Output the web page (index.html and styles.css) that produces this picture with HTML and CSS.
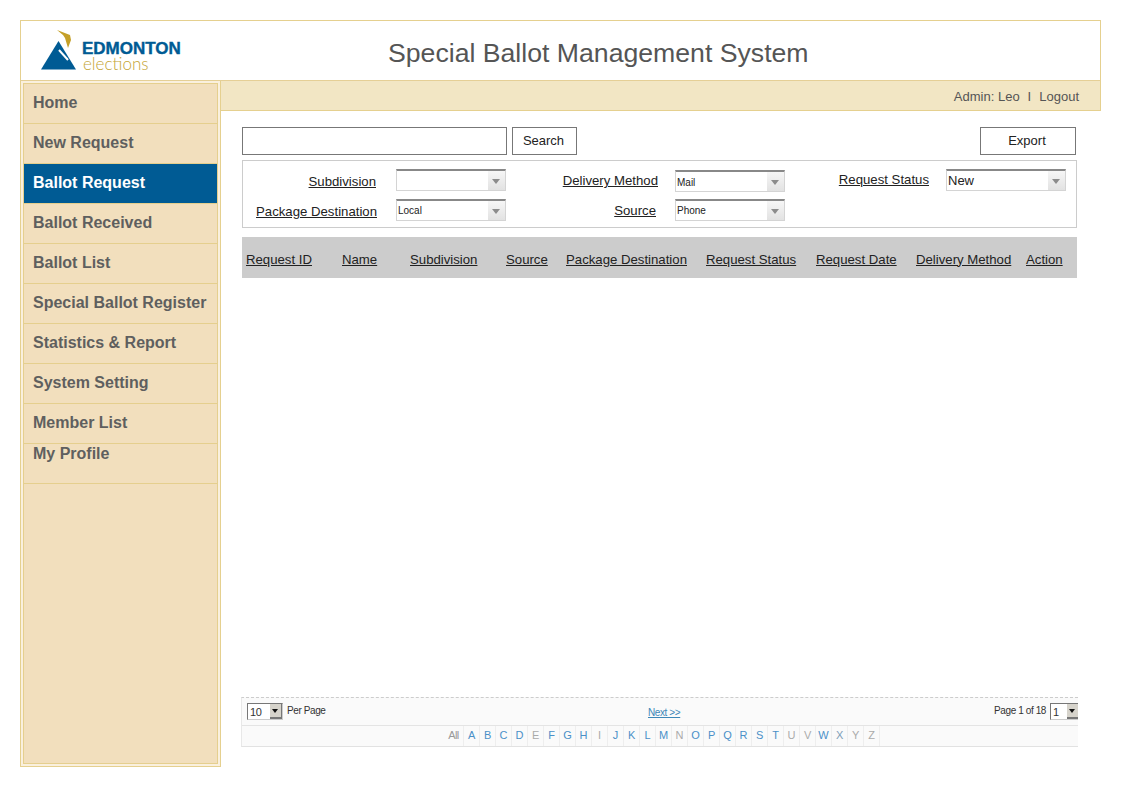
FILE: index.html
```html
<!DOCTYPE html>
<html lang="en">

<head>
    <meta charset="UTF-8" />
    <meta name="viewport" content="width=device-width, initial-scale=1.0" />
    <title>Special Ballot Management System</title>
    <link rel="stylesheet" href="styles.css">
</head>

<body>
    <div class="page">
        <header class="top">
            <div class="logo">
                <svg class="logo-mark" width="36" height="42" viewBox="0 0 36 42">
                    <path d="M0 39.5 L17.5 11 L35 39.5 Z" fill="#005b94" />
                    <path d="M18 20 L27 30" stroke="#fff" stroke-width="2" fill="none" />
                    <path d="M16 0 L29 5 L30 10 L27 18 L24 8 L22 5 Z" fill="#c5a028" />
                </svg>
                <div class="logo-text">
                    <span class="logo-city">EDMONTON</span>
                    <span class="logo-sub">elections</span>
                </div>
            </div>
            <h1 class="title">Special Ballot Management System</h1>
        </header>

        <div class="layout">
            <aside class="side">
                <nav class="menu">
                    <a class="menu-item" href="#">Home</a>
                    <a class="menu-item" href="#">New Request</a>
                    <a class="menu-item active" href="#">Ballot Request</a>
                    <a class="menu-item" href="#">Ballot Received</a>
                    <a class="menu-item" href="#">Ballot List</a>
                    <a class="menu-item" href="#">Special Ballot Register</a>
                    <a class="menu-item" href="#">Statistics &amp; Report</a>
                    <a class="menu-item" href="#">System Setting</a>
                    <a class="menu-item" href="#">Member List</a>
                    <a class="menu-item last" href="#">My Profile</a>
                </nav>
            </aside>

            <main class="main">
                <div class="userbar">
                    <span>Admin: Leo</span>
                    <span class="sep">I</span>
                    <a href="#">Logout</a>
                </div>

                <div class="content">
                    <div class="searchrow">
                        <input class="searchbox" type="text">
                        <button class="btn btn-search" type="button">Search</button>
                        <button class="btn btn-export" type="button">Export</button>
                    </div>

                    <div class="filters">
                        <a class="flabel f1" href="#">Subdivision</a>
                        <div class="combo"><span class="combo-val"></span><span class="combo-arrow"></span></div>
                        <a class="flabel f2" href="#">Delivery Method</a>
                        <div class="combo c2"><span class="combo-val">Mail</span><span class="combo-arrow"></span></div>
                        <a class="flabel f3" href="#">Request Status</a>
                        <div class="combo c3"><span class="combo-val big">New</span><span class="combo-arrow"></span></div>

                        <a class="flabel f4" href="#">Package Destination</a>
                        <div class="combo"><span class="combo-val">Local</span><span class="combo-arrow"></span></div>
                        <a class="flabel f5" href="#">Source</a>
                        <div class="combo"><span class="combo-val">Phone</span><span class="combo-arrow"></span></div>
                    </div>

                    <div class="results">
                        <a class="col w1" href="#">Request ID</a>
                        <a class="col w2" href="#">Name</a>
                        <a class="col w3" href="#">Subdivision</a>
                        <a class="col w4" href="#">Source</a>
                        <a class="col w5" href="#">Package Destination</a>
                        <a class="col w6" href="#">Request Status</a>
                        <a class="col w7" href="#">Request Date</a>
                        <a class="col w8" href="#">Delivery Method</a>
                        <a class="col" href="#">Action</a>
                    </div>

                    <div class="spacer"></div>

                    <div class="pager">
                        <div class="pager-row">
                            <div class="perpage">
                                <div class="mini"><span class="mini-val">10</span><span class="mini-btn"></span></div>
                                <span class="perpage-txt">Per Page</span>
                            </div>
                            <a class="next" href="#">Next &gt;&gt;</a>
                            <div class="pageof">
                                <span class="pageof-txt">Page 1 of 18</span>
                                <div class="mini small"><span class="mini-val">1</span><span class="mini-btn"></span></div>
                            </div>
                        </div>
                        <div class="alpha">
                            <span class="all">All</span>
                            <a href="#">A</a>
                            <a href="#">B</a>
                            <a href="#">C</a>
                            <a href="#">D</a>
                            <span>E</span>
                            <a href="#">F</a>
                            <a href="#">G</a>
                            <a href="#">H</a>
                            <span>I</span>
                            <a href="#">J</a>
                            <a href="#">K</a>
                            <a href="#">L</a>
                            <a href="#">M</a>
                            <span>N</span>
                            <a href="#">O</a>
                            <a href="#">P</a>
                            <a href="#">Q</a>
                            <a href="#">R</a>
                            <a href="#">S</a>
                            <a href="#">T</a>
                            <span>U</span>
                            <span>V</span>
                            <a href="#">W</a>
                            <a class="dim" href="#">X</a>
                            <span>Y</span>
                            <span>Z</span>
                        </div>
                    </div>
                </div>
            </main>
        </div>
    </div>
</body>

</html>
```

FILE: styles.css
```css
* {
    box-sizing: border-box;
}

body {
    margin: 0;
    padding: 20px;
    font-family: "Liberation Sans", Arial, sans-serif;
    font-size: 13px;
    color: #222;
    background: #fff;
}

a {
    color: inherit;
}

.page {
    width: 1081px;
}

/* header */
.top {
    display: flex;
    align-items: flex-start;
    height: 61px;
    border: 1px solid #e5d08f;
    border-bottom-color: #e5cf96;
}

.logo {
    display: flex;
    width: 347px;
    padding: 9px 0 0 20px;
}

.logo-mark {
    flex: none;
}

.logo-text {
    display: flex;
    flex-direction: column;
    margin: 11px 0 0 5px;
}

.logo-city {
    font-size: 17px;
    line-height: 15px;
    font-weight: bold;
    -webkit-text-stroke: 0.4px #005b94;
    color: #005b94;
}

.logo-sub {
    margin-left: 1px;
    font-family: Lato, sans-serif;
    font-weight: 300;
    font-size: 17px;
    line-height: 15px;
    color: #c4a535;
}

.title {
    margin: 16px 0 0 20px;
    font-size: 26.65px;
    line-height: 32px;
    font-weight: normal;
    color: #555;
}

.layout {
    display: flex;
    align-items: flex-start;
}

/* left menu */
.side {
    width: 201px;
    height: 686px;
    padding: 2px;
    border: 1px solid #e5d08f;
    border-top: none;
    background: #faf0de;
}

.menu {
    display: flex;
    flex-direction: column;
    height: 100%;
    border: 1px solid #e5cf8e;
    background: #f2dfbd;
}

.menu-item {
    display: block;
    height: 40px;
    padding-left: 9px;
    border-bottom: 1px solid #e5cf8e;
    font-size: 16px;
    line-height: 37px;
    font-weight: bold;
    color: #5f5f5f;
    text-decoration: none;
}

.menu-item.active {
    background: #005b94;
    color: #fff;
}

.menu-item.last {
    line-height: 20px;
}

/* main */
.main {
    display: flex;
    flex-direction: column;
    flex: 1;
    height: 686px;
}

.userbar {
    display: flex;
    justify-content: flex-end;
    gap: 8px;
    height: 30px;
    padding: 8px 21px 0 0;
    border: 1px solid #e5d08f;
    border-top: none;
    border-left: none;
    background: #f2e6c4;
    color: #555;
    line-height: 15px;
}

.userbar a {
    text-decoration: none;
}

.content {
    display: flex;
    flex-direction: column;
    flex: 1;
    padding: 16px 23px 20px 21px;
}

.searchrow {
    display: flex;
    height: 28px;
}

.searchbox {
    width: 265px;
    height: 28px;
    border: 1px solid #777;
    background: #fff;
}

.btn {
    height: 28px;
    padding: 0 2px 2px 0;
    border: 1px solid #777;
    background: #fff;
    font-family: inherit;
    font-size: 13px;
    color: #222;
}

.btn-search {
    width: 65px;
    margin-left: 5px;
}

.btn-export {
    width: 96px;
    margin-left: auto;
    margin-right: 2px;
}

/* filter box */
.filters {
    display: grid;
    grid-template-columns: 153px 110px 169px 110px 161px 120px;
    grid-template-rows: 22px 22px;
    row-gap: 8px;
    align-items: center;
    justify-items: start;
    width: 835px;
    height: 68px;
    margin-top: 5px;
    padding: 8px 0 0;
    border: 1px solid #ccc;
}

.flabel {
    justify-self: end;
    font-size: 13.2px;
    line-height: 16px;
    white-space: nowrap;
    color: #222;
}

.f1 {
    margin: 4px 20px 0 0;
}

.f2 {
    margin: 2px 17px 0 0;
}

.f3 {
    margin: 0 17px 0 0;
}

.f4 {
    margin: 4px 19px 0 0;
}

.f5 {
    margin: 2px 19px 0 0;
}

.combo {
    display: flex;
    width: 110px;
    height: 22px;
    border: 1px solid #d4d4d4;
    border-top: 2px solid #888;
    background: #fff;
}

.c2 {
    margin-top: 2px;
}

.c2 .combo-val {
    line-height: 21px;
}

.c3 {
    width: 120px;
}

.combo-val {
    flex: 1;
    padding-left: 1px;
    font-size: 10px;
    line-height: 19px;
    color: #222;
}

.c3 .combo-val.big {
    font-size: 13px;
}

.combo-arrow {
    position: relative;
    width: 17px;
    background: linear-gradient(#f6f6f6, #e2e2e2);
}

.combo-arrow::after {
    content: "";
    position: absolute;
    left: 4px;
    top: 8px;
    border-top: 5px solid #8c8c8c;
    border-left: 4px solid transparent;
    border-right: 4px solid transparent;
}

/* results head */
.results {
    display: flex;
    align-items: center;
    width: 835px;
    height: 41px;
    margin-top: 9px;
    padding: 3px 0 0 4px;
    background: #ccc;
    font-size: 13.2px;
}

.col {
    flex: none;
    color: #222;
}

.w1 {
    width: 96px;
}

.w2 {
    width: 68px;
}

.w3 {
    width: 96px;
}

.w4 {
    width: 60px;
}

.w5 {
    width: 140px;
}

.w6 {
    width: 110px;
}

.w7 {
    width: 100px;
}

.w8 {
    width: 110px;
}

.spacer {
    flex: 1;
}

/* pager */
.pager {
    width: 837px;
    margin-left: -1px;
    overflow: hidden;
    border-top: 1px dashed #ccc;
    border-bottom: 1px solid #e2e2e2;
    border-left: 1px solid #e8e8e8;
    background: #fafafa;
    font-size: 10px;
    letter-spacing: -0.4px;
    color: #333;
}

.pager-row {
    display: flex;
    height: 28px;
    padding-top: 5px;
    border-bottom: 1px solid #e4e4e4;
}

.perpage {
    display: flex;
    gap: 4px;
    width: 406px;
    padding-left: 5px;
}

.perpage-txt {
    line-height: 15px;
}

.mini {
    display: flex;
    flex: none;
    width: 36px;
    height: 17px;
    border: 1px solid #777;
    border-right-color: #ccc;
    border-bottom-color: #ccc;
    background: #fff;
}

.mini.small {
    width: 30px;
}

.mini-val {
    flex: 1;
    padding-left: 2px;
    font-size: 11px;
    line-height: 17px;
}

.mini-btn {
    position: relative;
    width: 12px;
    background: #d6d3cb;
    border-bottom: 2px solid #777;
    border-right: 1px solid #777;
}

.mini-btn::after {
    content: "";
    position: absolute;
    left: 2px;
    top: 5px;
    border-top: 4px solid #111;
    border-left: 3px solid transparent;
    border-right: 3px solid transparent;
}

.next {
    margin-top: 4px;
    color: #3d87b8;
}

.pageof {
    display: flex;
    flex: none;
    gap: 4px;
    margin: 0 -2px 0 auto;
}

.pageof-txt {
    line-height: 15px;
}

.alpha {
    display: flex;
    justify-content: flex-end;
    height: 20px;
    padding-right: 198px;
    font-size: 11px;
    line-height: 19px;
    letter-spacing: -0.1px;
}

.alpha a,
.alpha span {
    width: 16px;
    border-right: 1px solid #eee;
    text-align: center;
    text-decoration: none;
    color: #aaa;
}

.alpha a {
    color: #4a90c8;
}

.alpha .dim {
    color: #7d9db8;
}

.alpha .all {
    width: 20px;
    letter-spacing: -0.6px;
    color: #999;
}
```
